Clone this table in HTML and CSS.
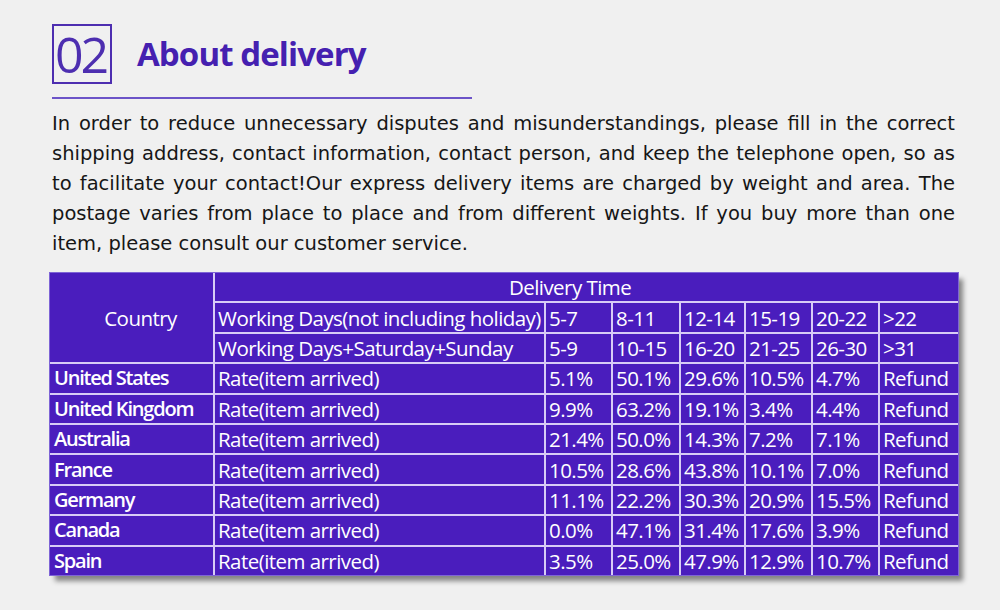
FILE: index.html
```html
<!DOCTYPE html>
<html>
<head>
<meta charset="utf-8">
<link rel="stylesheet" href="styles.css">
</head>
<body>
<div class="page">
  <div class="head">
    <div class="num">02</div>
    <h1 class="title">About delivery</h1>
  </div>
  <div class="rule"></div>
  <p class="intro">In order to reduce unnecessary disputes and misunderstandings, please fill in the correct shipping address, contact information, contact person, and keep the telephone open, so as to facilitate your contact!Our express delivery items are charged by weight and area. The postage varies from place to place and from different weights. If you buy more than one item, please consult our customer service.</p>
  <table class="rates">
    <colgroup>
      <col style="width:164px"><col style="width:331px"><col style="width:67px"><col style="width:68px"><col style="width:65px"><col style="width:67px"><col style="width:67px"><col style="width:79px">
    </colgroup>
    <tr><th class="country-h" rowspan="3">Country</th><th class="dt" colspan="7">Delivery Time</th></tr>
    <tr><td>Working Days(not including holiday)</td><td>5-7</td><td>8-11</td><td>12-14</td><td>15-19</td><td>20-22</td><td>&gt;22</td></tr>
    <tr><td>Working Days+Saturday+Sunday</td><td>5-9</td><td>10-15</td><td>16-20</td><td>21-25</td><td>26-30</td><td>&gt;31</td></tr>
    <tr><td class="c">United States</td><td>Rate(item arrived)</td><td>5.1%</td><td>50.1%</td><td>29.6%</td><td>10.5%</td><td>4.7%</td><td>Refund</td></tr>
    <tr><td class="c">United Kingdom</td><td>Rate(item arrived)</td><td>9.9%</td><td>63.2%</td><td>19.1%</td><td>3.4%</td><td>4.4%</td><td>Refund</td></tr>
    <tr><td class="c">Australia</td><td>Rate(item arrived)</td><td>21.4%</td><td>50.0%</td><td>14.3%</td><td>7.2%</td><td>7.1%</td><td>Refund</td></tr>
    <tr><td class="c">France</td><td>Rate(item arrived)</td><td>10.5%</td><td>28.6%</td><td>43.8%</td><td>10.1%</td><td>7.0%</td><td>Refund</td></tr>
    <tr><td class="c">Germany</td><td>Rate(item arrived)</td><td>11.1%</td><td>22.2%</td><td>30.3%</td><td>20.9%</td><td>15.5%</td><td>Refund</td></tr>
    <tr><td class="c">Canada</td><td>Rate(item arrived)</td><td>0.0%</td><td>47.1%</td><td>31.4%</td><td>17.6%</td><td>3.9%</td><td>Refund</td></tr>
    <tr><td class="c">Spain</td><td>Rate(item arrived)</td><td>3.5%</td><td>25.0%</td><td>47.9%</td><td>12.9%</td><td>10.7%</td><td>Refund</td></tr>
  </table>
</div>
</body>
</html>
```
FILE: styles.css
```css
html, body {
  margin: 0;
  padding: 0;
  background: #f0f0f0;
}
.page {
  width: 1000px;
  height: 610px;
  box-sizing: border-box;
  padding: 24px 0 0 52px;
}
.head {
  display: flex;
  align-items: center;
  gap: 25px;
  height: 60px;
}
.num {
  box-sizing: border-box;
  width: 60px;
  height: 60px;
  border: 2px solid #4d2eb0;
  color: #4d2eb0;
  font-family: "Open Sans", sans-serif;
  font-weight: 400;
  font-size: 50px;
  line-height: 56px;
  letter-spacing: -3px;
  text-indent: -3px;
  text-align: center;
}
.title {
  margin: 0;
  color: #4520b0;
  font-family: "Open Sans", sans-serif;
  font-weight: 700;
  font-size: 33px;
  letter-spacing: -0.9px;
  line-height: 40px;
}
.rule {
  margin-top: 13px;
  width: 420px;
  height: 2px;
  background: #6c54c8;
}
.intro {
  margin: 10px 0 0 0;
  width: 903px;
  font-family: "DejaVu Sans", sans-serif;
  font-size: 19.5px;
  line-height: 30px;
  color: #161616;
  text-align: justify;
  text-align-last: left;
}
.rates {
  margin: 14px 0 0 -2px;
  border-collapse: collapse;
  table-layout: fixed;
  width: 908px;
  height: 302px;
  background: #4a1dbd;
  color: #fff;
  font-family: "Open Sans", sans-serif;
  font-size: 20.5px;
  letter-spacing: -0.55px;
  box-shadow: 5px 6px 5px rgba(0, 0, 0, 0.45);
  outline: 1px solid #7e64d6;
}
.rates th, .rates td {
  border: 2px solid #d8ccf6;
  padding: 0 0 0 3px;
  line-height: 26px;
  white-space: nowrap;
  text-align: left;
  font-weight: 400;
  overflow: hidden;
}
.rates tr:first-child th { border-top: none; }
.rates tr th:first-child, .rates tr td:first-child { border-left: none; }
.rates tr th:last-child, .rates tr td:last-child { border-right: none; }
.rates tr:last-child td { border-bottom: none; }
.rates tr:nth-child(n+2) td:first-child { border-left: 2px solid #d8ccf6; }
.rates tr:nth-child(n+4) td:first-child { border-left: none; }
.rates th.country-h {
  text-align: center;
  padding: 0 0 0 18px;
}
.rates th.dt {
  text-align: center;
  padding-right: 36px;
}
.rates td.c {
  font-weight: 600;
  font-size: 20px;
  letter-spacing: -1.2px;
  padding-left: 4px;
}
```
